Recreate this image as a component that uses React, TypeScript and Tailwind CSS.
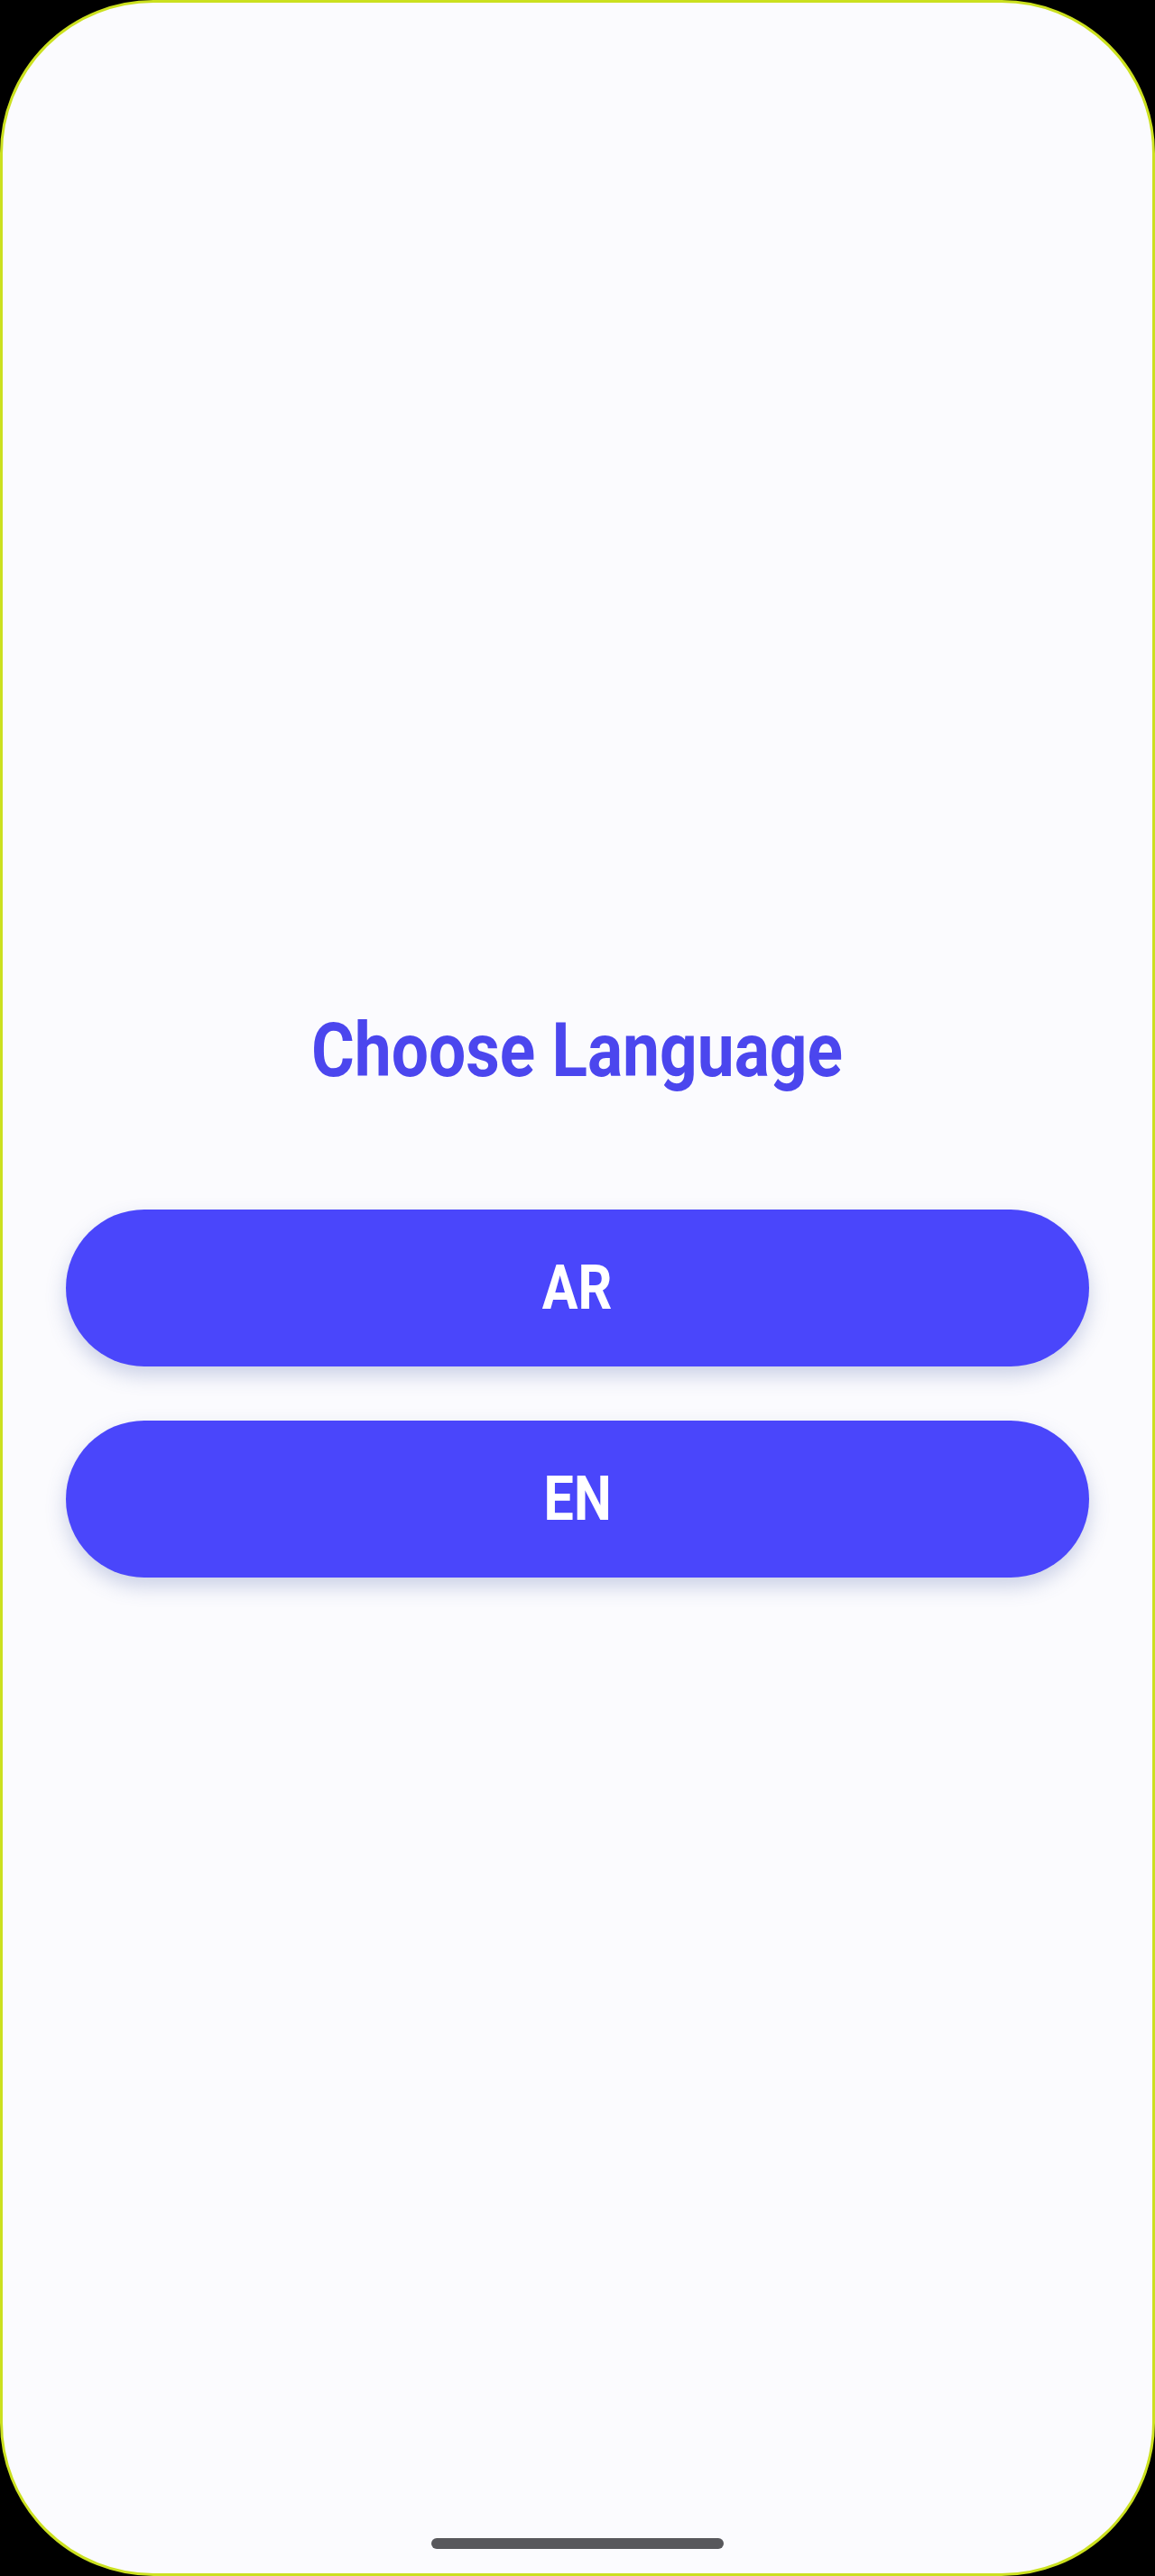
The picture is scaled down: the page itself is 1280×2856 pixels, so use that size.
import React from 'react';

const languages = ['AR', 'EN'];

export default function App() {
  return (
    <div className="h-[2856px] w-full bg-black">
      <div className="flex h-full flex-col rounded-[170px] border-[3px] border-[#cbe01f] bg-[#fbfbfe] font-['Roboto',sans-serif]">
        <div className="flex flex-1 flex-col items-center pt-[1112px]">
          {/* no condensed face installed, so squeeze Roboto Bold */}
          <h1 className="scale-x-[0.87] text-[84px] leading-[100px] font-bold text-[#4b46ee]">Choose Language</h1>

          <div className="mt-[126px] flex w-full flex-col gap-[60px] px-[70px]">
            {languages.map((lang) => (
              <button
                key={lang}
                className="flex h-[174px] w-full items-center justify-center rounded-full bg-[#4a46fb] text-white shadow-[0_10px_22px_rgba(80,100,170,0.28)]"
              >
                <span className="inline-block scale-x-[0.87] text-[68px] font-bold">{lang}</span>
              </button>
            ))}
          </div>
        </div>

        <div className="flex justify-center pb-[27px]">
          <div className="h-[12px] w-[324px] rounded-full bg-[#58585c]" />
        </div>
      </div>
    </div>
  );
}
